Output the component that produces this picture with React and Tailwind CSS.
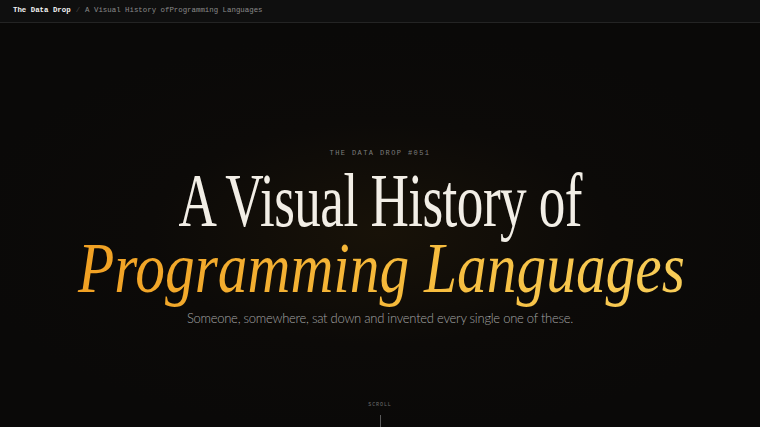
export default function App() {
  const mono = { fontFamily: '"Liberation Mono", "DejaVu Sans Mono", monospace' };
  return (
    <div className="flex h-[427px] w-full flex-col overflow-hidden bg-[#0a0908]">
      <header
        className="flex h-[23px] shrink-0 items-center gap-[5px] border-b border-[#242424] bg-[#0f0f0f] px-[13px] text-[7.4px]"
        style={mono}
      >
        <span className="font-bold text-[#f2f2f2]">The Data Drop</span>
        <span className="text-[#444]">/</span>
        <span className="text-[#8a8a8a]">A Visual History ofProgramming Languages</span>
      </header>

      <main className="flex flex-1 flex-col items-center bg-[radial-gradient(ellipse_55%_50%_at_50%_52%,#181208_0%,#0c0a08_55%,#0a0908_100%)]">
        <p className="mt-[127px] text-[7px] leading-none tracking-[0.2em] text-[#7c7c7c]" style={mono}>
          THE DATA DROP #051
        </p>

        <h1 className="mt-[7px] flex w-full flex-col items-center font-['Liberation_Serif',serif] font-normal">
          <span className="flex h-[72px] w-full justify-center">
            <span className="inline-block scale-x-[0.69] whitespace-nowrap text-[77px] leading-[72px] tracking-[-0.01em] text-[#f2eee6]">
              A Visual History of
            </span>
          </span>
          <span className="flex h-[62px] w-full justify-center">
            <span className="inline-block h-[82px] scale-x-[0.825] whitespace-nowrap bg-[linear-gradient(90deg,#f0a023,#f6bb3c_55%,#f8cd58)] bg-clip-text pl-[3px] text-[72px] italic leading-[64px] text-transparent">
              Programming Languages
            </span>
          </span>
        </h1>

        <p className="mt-[11px] font-['Lato',sans-serif] text-[13px] font-light tracking-[-0.02em] text-[#a3a3a3]">
          Someone, somewhere, sat down and invented every single one of these.
        </p>

        <div className="mt-auto flex flex-col items-center">
          <span className="text-[5px] leading-none tracking-[0.18em] text-[#6f6f6f]" style={mono}>
            SCROLL
          </span>
          <span className="mt-[7px] h-[12px] w-px bg-[#5a5a5a]" />
        </div>
      </main>
    </div>
  );
}
